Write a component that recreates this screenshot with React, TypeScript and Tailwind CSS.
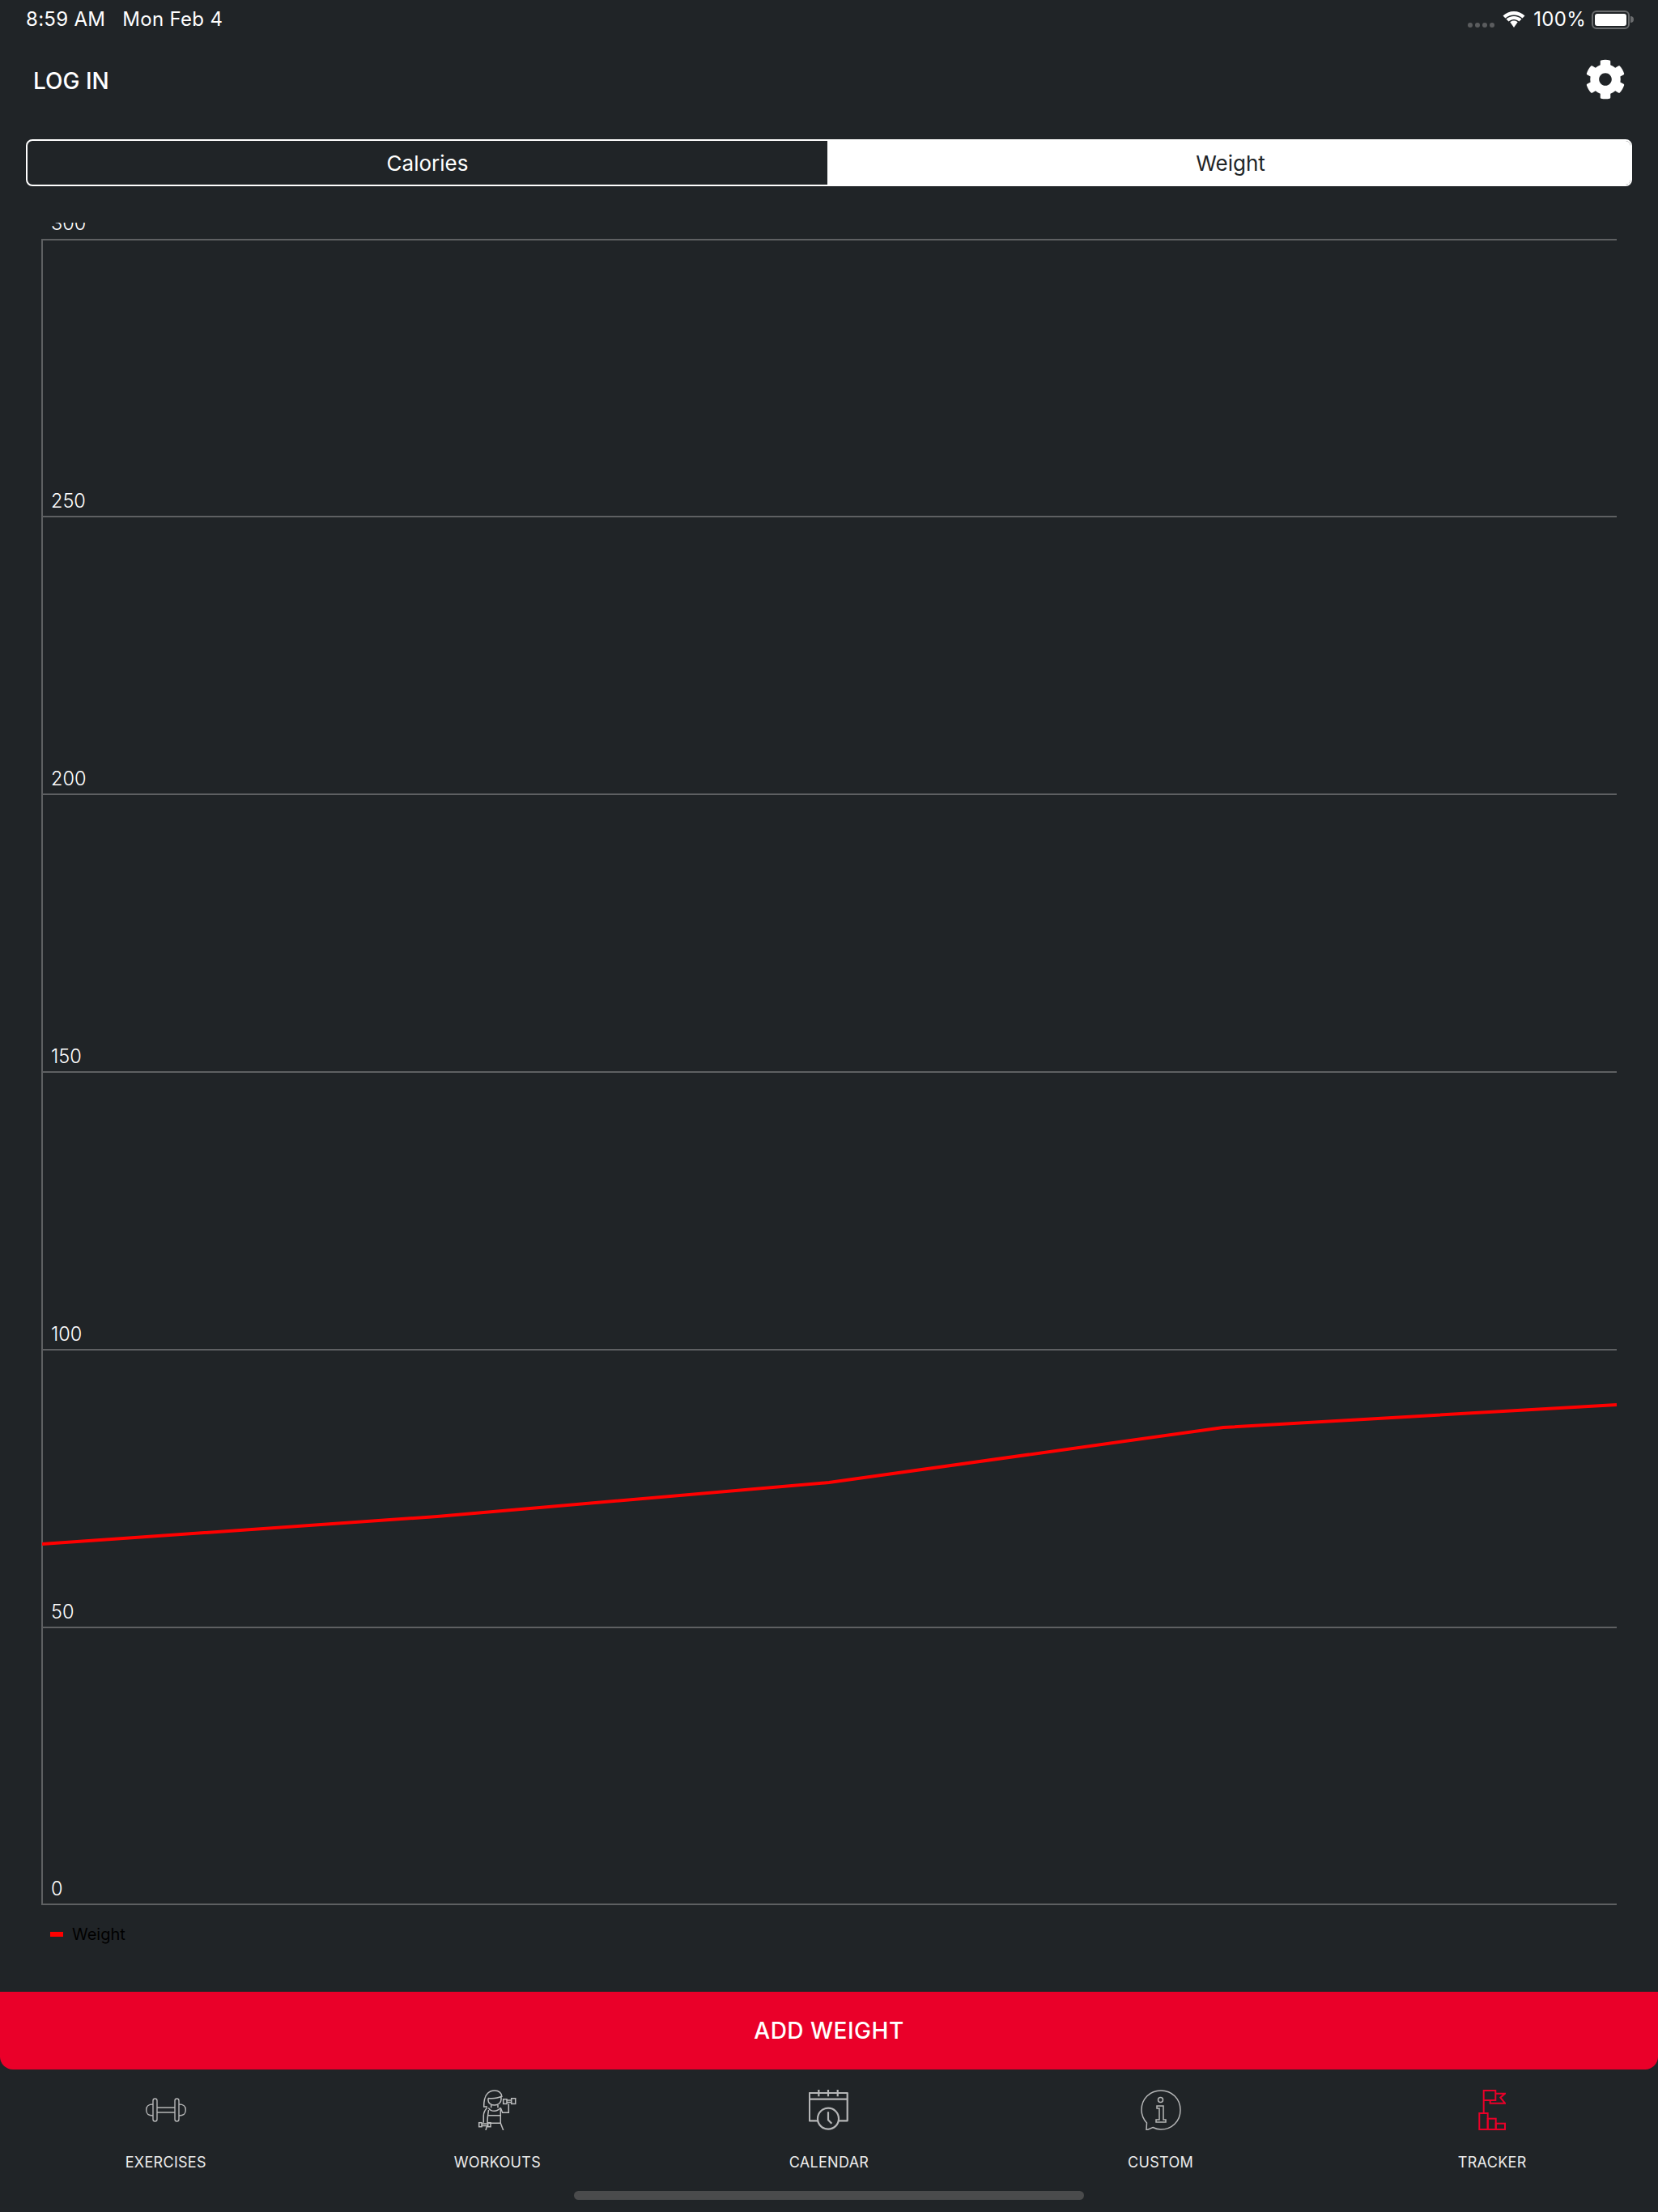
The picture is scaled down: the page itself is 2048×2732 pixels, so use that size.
import React from "react";
import { FaCog } from "react-icons/fa";

const font = "font-['Inter','Liberation_Sans',sans-serif]";

const gridLines = [
  { label: "300", y: 21 },
  { label: "250", y: 363 },
  { label: "200", y: 706 },
  { label: "150", y: 1049 },
  { label: "100", y: 1392 },
  { label: "50", y: 1735 },
  { label: "0", y: 2077 },
];

const DumbbellIcon = () => (
  <svg width="50" height="50" viewBox="0 0 50 50" fill="none" stroke="#b5b6b7" strokeWidth="1.4">
    <rect x="9" y="11" width="5" height="28" rx="2.5" />
    <rect x="36" y="11" width="5" height="28" rx="2.5" />
    <path d="M9 18C3 18 .7 20 .7 25s2.300 7 8.300 7M41 18c6 0 8.300 2 8.300 7s-2.300 7-8.300 7" />
    <path d="M14 22h22M14 28h22" />
  </svg>
);

const WorkoutIcon = () => (
  <svg width="50" height="50" viewBox="0 0 50 50" fill="none" stroke="#bdbebf" strokeWidth="1.5">
    {/* hair and face */}
    <path d="M13 21H8.700c0-3 0-6 .8-9C10.500 6 15 1 22 1c5 0 9 3 9 8" />
    <path d="M14 10.500c6 .5 12 0 16.500-2.500M14 10.500V13c0 3.500 3.500 6 8 6s8-3 8-7V8" />
    {/* neck and collar */}
    <path d="M17.700 19v3.300M26 19v3.300M14.300 22.300C16 25 19 26.300 21.500 26.300s5.500-1.300 7.800-4" />
    {/* arms */}
    <path d="M29.300 22.300l2.400 6h7.600V17.300" />
    <path d="M12.700 22.300C10 25 8.300 28 8.300 32.300v8.400M14.500 25c-1 6-1.500 12-1.500 16" />
    {/* torso and legs */}
    <path d="M13.700 31.700h15.600M14.300 41.300h15M29.300 24v17.300l3.400 8.700M12.700 44 11 50" />
    {/* dumbbells */}
    <rect x="32.700" y="11.700" width="4.300" height="5.700" />
    <path d="M37 13h5.700M37 15.500h5.700" />
    <rect x="42.700" y="10.700" width="5" height="6.700" />
    <rect x="2.700" y="40.700" width="3.300" height="5" />
    <path d="M6 42h7.700M6 44.500h7.700" />
    <rect x="13.700" y="40.700" width="3.300" height="5" />
  </svg>
);

const CalendarIcon = () => (
  <svg width="50" height="50" viewBox="0 0 50 50" fill="none" stroke="#b5b6b7" strokeWidth="2.2">
    <path d="M11 38.300H.9V4h46.800v34.300H37" strokeLinejoin="round" />
    <path d="M.9 11.700h46.800M12.300 0v8.300M24 0v8.300M35.700 0v8.300" />
    <circle cx="24" cy="35.700" r="13" />
    <path d="M24 27.300v10l4.300 4.400" />
  </svg>
);

const InfoIcon = () => (
  <svg width="50" height="50" viewBox="0 0 50 50" fill="none" stroke="#b5b6b7" strokeWidth="1.5">
    <path d="M7.500 41C3.500 36.500 1 31.500 1 25 1 11 11.500 1 25 1s24 10 24 24-10.500 24-24 24c-4 0-7-1-10-2.500L7 50z" />
    <circle cx="24.500" cy="12.500" r="3" />
    <path d="M20 20h8v17h3v3H19v-3h4V23h-3z" />
  </svg>
);

const TrackerIcon = () => (
  <svg width="34" height="50" viewBox="0 0 34 50" fill="none" stroke="#ea0029" strokeWidth="2">
    <path d="M6.700 29V.9h14.600V13H6.700" />
    <path d="M21.300 4.700H33l-5.700 5L33 16.700H14.700V13" />
    <rect x="1.300" y="29" width="10.400" height="20" />
    <rect x="11.700" y="35.700" width="10" height="13.300" />
    <rect x="21.700" y="41.700" width="11.300" height="7.300" />
  </svg>
);

const tabs = [
  { label: "EXERCISES", icon: <DumbbellIcon /> },
  { label: "WORKOUTS", icon: <WorkoutIcon /> },
  { label: "CALENDAR", icon: <CalendarIcon /> },
  { label: "CUSTOM", icon: <InfoIcon /> },
  { label: "TRACKER", icon: <TrackerIcon /> },
];

const StatusBar = () => (
  <div className="flex h-[48px] items-center justify-between pl-[32px] pr-[30px] text-[24px] tracking-[0.3px] text-white">
    <div className="flex gap-[21px]">
      <span>8:59 AM</span>
      <span>Mon Feb 4</span>
    </div>
    <div className="flex items-center">
      {/* no signal dots */}
      <div className="mt-[14px] mr-[10px] flex gap-[3px]">
        <div className="h-[6px] w-[6px] rounded-full bg-[#5a5c5e]" />
        <div className="h-[6px] w-[6px] rounded-full bg-[#5a5c5e]" />
        <div className="h-[6px] w-[6px] rounded-full bg-[#5a5c5e]" />
        <div className="h-[6px] w-[6px] rounded-full bg-[#5a5c5e]" />
      </div>
      <svg width="28" height="20" viewBox="0 0 28 20" fill="white">
        <path d="M14 4.500c4 0 7.500 1.500 10.500 4L27.500 5.500C24 2 19 0 14 0S4 2 .5 5.500l3 3c3-2.500 6.500-4 10.500-4z" />
        <path d="M14 10c2.500 0 4.500 1 6.500 2.500l3-3C21 7.300 17.500 6 14 6s-7 1.300-9.500 3.500l3 3C9.500 11 11.500 10 14 10z" />
        <path d="M14 11.500c-1.800 0-3.300.6-4.700 1.700L14 20l4.700-6.800c-1.400-1.100-2.900-1.700-4.700-1.700z" />
      </svg>
      <span className="ml-[10px]">100%</span>
      <div className="ml-[7px] flex items-center">
        <div className="h-[23px] w-[47px] rounded-[6px] border-2 border-[#6a6c6e] p-[2px]">
          <div className="h-full w-full rounded-[3px] bg-white" />
        </div>
        <div className="ml-[1px] h-[8px] w-[4px] rounded-r-full bg-[#6a6c6e]" />
      </div>
    </div>
  </div>
);

const WeightChart = () => (
  <svg width="2048" height="2079" viewBox="0 0 2048 2079" className="block">
    <g stroke="#5e6062" strokeWidth="2">
      <line x1="52" y1="20" x2="52" y2="2078" />
      {gridLines.map((g) => (
        <line key={g.label} x1="52" y1={g.y} x2="1997" y2={g.y} />
      ))}
    </g>
    {gridLines.map((g) => (
      <text key={g.label} x="63" y={g.label === "300" ? 9 : g.y - 11} fill="white" fontSize="23.5" fontFamily="Inter, sans-serif" fontWeight="300">
        {g.label}
      </text>
    ))}
    <polyline points="52,1632 540,1598 1024,1556 1511,1488 1997,1460" fill="none" stroke="#ff0000" strokeWidth="4" />
  </svg>
);

export default function App() {
  return (
    <div className={`flex h-[2732px] w-[2048px] flex-col overflow-hidden bg-[#202427] ${font}`}>
      <StatusBar />

      {/* Header */}
      <div className="flex h-[100px] items-center justify-between pl-[41px] pr-[40px]">
        <span className="pt-[3px] text-[28px] font-medium text-white">LOG IN</span>
        <FaCog className="h-[50px] w-[50px] text-white" />
      </div>

      {/* Segmented control */}
      <div className="mx-[32px] mt-[24px] flex h-[58px] overflow-hidden rounded-[8px] border-2 border-white text-[26px]">
        <div className="flex w-[988px] items-center justify-center text-white">Calories</div>
        <div className="flex flex-1 items-center justify-center bg-white pl-[4px] text-[#202427]">Weight</div>
      </div>

      <div className="mt-[45px]">
        <WeightChart />
      </div>

      {/* Legend */}
      <div className="mt-[23px] flex items-center pl-[62px]">
        <div className="h-[6px] w-[16px] bg-[#ff0000]" />
        <span className="ml-[11px] text-[20px] leading-[24px] text-black">Weight</span>
      </div>

      <div className="mt-[59px] flex h-[96px] items-center justify-center rounded-b-[16px] bg-[#ea0029] text-[28px] font-medium tracking-[0.5px] text-white">
        ADD WEIGHT
      </div>

      {/* Tab bar */}
      <div className="mt-[25px] grid grid-cols-5">
        {tabs.map((t) => (
          <div key={t.label} className="flex flex-col items-center">
            <div className="flex h-[50px] items-center justify-center">{t.icon}</div>
            <span className="mt-[29px] text-[18px] leading-[22px] tracking-[0.3px] text-[#ececec]">{t.label}</span>
          </div>
        ))}
      </div>

      <div className="mx-auto mt-[24px] h-[11px] w-[630px] rounded-full bg-[#4a4b4c]" />
    </div>
  );
}
